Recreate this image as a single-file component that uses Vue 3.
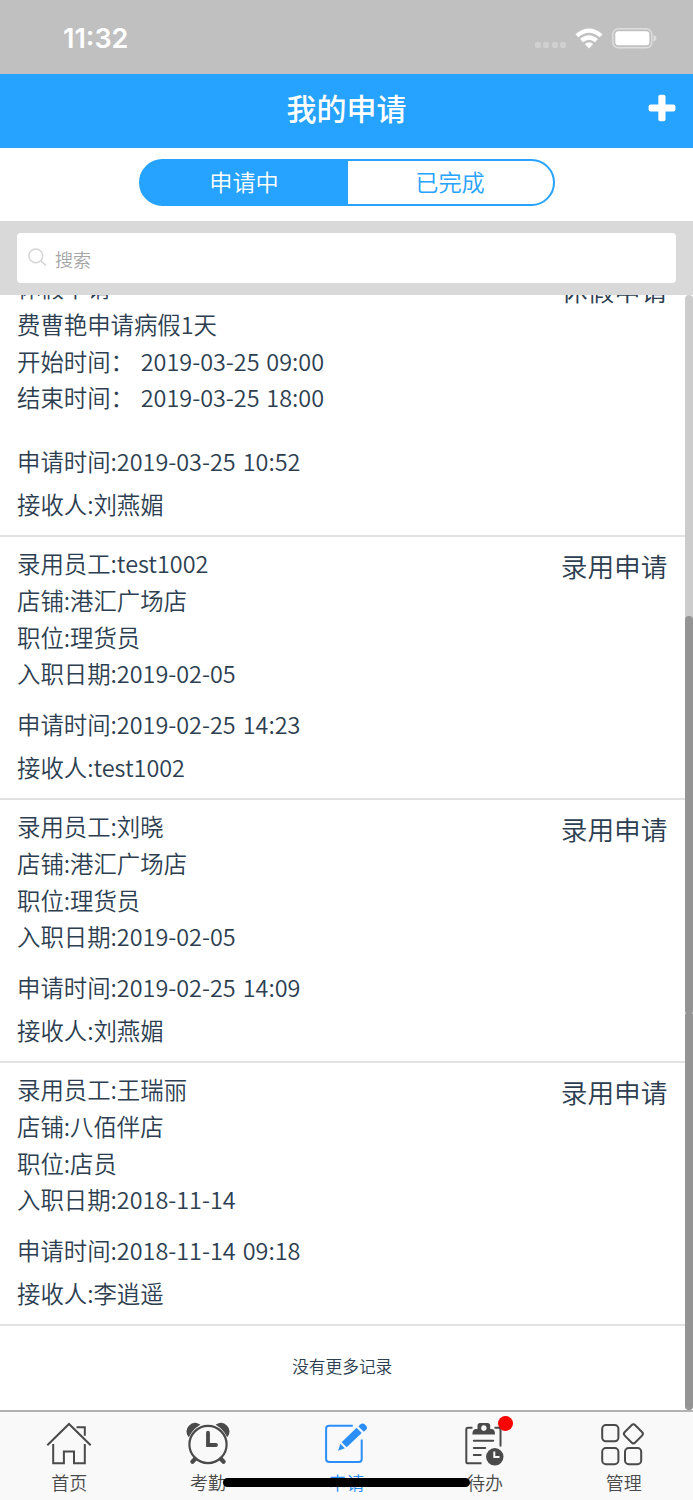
<template>
  <div class="page">
    <!-- 状态栏 -->
    <div class="status-bar">
      <span class="clock">11:32</span>
      <div class="status-icons">
        <div class="signal"><i v-for="n in 4" :key="n"></i></div>
        <svg class="wifi" viewBox="0 0 28 21">
          <path d="M0.4 6.2 Q14 -5.4 27.6 6.2 L24.7 9.3 Q14 0.2 3.3 9.3 Z" />
          <path d="M5.1 11.1 Q14 3.6 22.9 11.1 L20 14.2 Q14 9.2 8 14.2 Z" />
          <path d="M9.8 16 Q14 12.4 18.2 16 L14 20.4 Z" />
        </svg>
        <svg class="battery" viewBox="0 0 45 21">
          <rect x="0.8" y="0.8" width="39" height="19" rx="5.5" fill="none" stroke="#dedede" stroke-width="1.4" />
          <rect x="3.3" y="3.3" width="34" height="14" rx="3" fill="#fff" />
          <path d="M41.5 7 Q44.4 8 44.4 10.3 Q44.4 12.8 41.5 13.7 Z" fill="#dedede" />
        </svg>
      </div>
    </div>

    <!-- 标题 -->
    <div class="header">
      <span class="title">我的申请</span>
      <svg class="plus" viewBox="0 0 28 28">
        <rect x="10.3" y="0.7" width="7.2" height="26.6" rx="1.8" />
        <rect x="0.6" y="10.4" width="26.8" height="7.2" rx="1.8" />
      </svg>
    </div>

    <!-- 切换 -->
    <div class="tabs">
      <div class="tab-group">
        <div
          v-for="(tab, i) in tabs"
          :key="tab"
          class="tab"
          :class="{ active: i === current }"
          @click="current = i"
        >{{ tab }}</div>
      </div>
    </div>

    <!-- 搜索 -->
    <div class="search">
      <div class="search-box">
        <svg class="search-icon" viewBox="0 0 19 19">
          <circle cx="7.8" cy="7.8" r="6.9" />
          <path d="M12.8 12.8 L18 17.6" />
        </svg>
        <span>搜索</span>
      </div>
    </div>

    <!-- 申请列表 -->
    <div class="list">
      <div class="list-body">
        <div class="card" v-for="(item, i) in list" :key="i">
          <div class="info">
            <div class="lines" :class="{ leave: item.leave }">
              <p v-for="line in item.lines" :key="line">{{ line }}</p>
            </div>
            <div class="meta">
              <p>申请时间:{{ item.time }}</p>
              <p>接收人:{{ item.receiver }}</p>
            </div>
          </div>
          <div class="type">{{ item.type }}</div>
        </div>
        <div class="no-more">没有更多记录</div>
      </div>
      <div class="scrollbar">
        <div class="space"></div>
        <div class="thumb upper"></div>
        <div class="thumb lower"></div>
      </div>
    </div>

    <!-- 底部导航 -->
    <div class="nav">
      <div class="nav-item">
        <svg viewBox="0 0 48 48" class="line">
          <path d="M2.3 24.3 L24 3 L45.7 24.3" />
          <path d="M31.5 6.3 H39.8 V14.8" />
          <path d="M8.2 23 V42.3 H18.9 V30.5 H29 V42.3 H39.8 V23" />
        </svg>
        <span>首页</span>
      </div>
      <div class="nav-item">
        <svg viewBox="0 0 48 48" class="line">
          <circle cx="24" cy="23.5" r="18.6" stroke-width="2.2" />
          <path d="M24 11.7 V24 H32" stroke-width="3.8" stroke-linecap="round" />
          <path d="M11 38 L8.4 40.8 M37 38 L39.6 40.8" stroke-width="4.2" stroke-linecap="round" />
          <path d="M4.7 14.5 A7.6 7.6 0 0 1 14.6 3.7 Q8 8 4.7 14.5 Z" fill="#4a4a4a" stroke-width="1.8" />
          <path d="M43.3 14.5 A7.6 7.6 0 0 0 33.4 3.7 Q40 8 43.3 14.5 Z" fill="#4a4a4a" stroke-width="1.8" />
        </svg>
        <span>考勤</span>
      </div>
      <div class="nav-item active">
        <svg viewBox="-0.8 0 48 48" class="line">
          <path d="M30 4.8 H6.5 Q3.3 4.8 3.3 7.5 V38.2 Q3.3 40.9 6.5 40.9 H36.2 Q38.9 40.9 38.9 38.2 V18.5" />
          <g fill="#2b8ff7" stroke="none">
            <path d="M18.8 21.2 L33.8 6.8 L38.9 11.9 L23.8 26.2 Z" />
            <path d="M17.6 22.8 L22 27.2 L15.3 29.8 Z" />
            <path d="M35.6 5.4 L37.8 3.3 Q40 1.6 42.7 4 Q45.3 6.6 43.3 8.8 L41 10.8 Z" />
          </g>
        </svg>
        <span>申请</span>
      </div>
      <div class="nav-item">
        <svg viewBox="0.5 0 48 48" class="line">
          <path d="M12 6.8 H7.5 Q5.8 6.8 5.8 8.5 V40.7 Q5.8 42.3 7.5 42.3 H21" />
          <path d="M34 6.8 H38 Q40 6.8 40 8.5 V25.5" />
          <path
            d="M17 8 V4.5 Q17 2 19.5 2 H27 Q29.7 2 29.7 4.5 V8 H31.5 Q34.5 8.5 34.5 13.4 H11.8 Q12 8.5 15 8 Z M23.3 4.3 A2.8 2.8 0 1 0 23.4 4.3 Z"
            fill="#4a4a4a"
            stroke="none"
            fill-rule="evenodd"
          />
          <path d="M13.3 19.8 H32.7 M13.3 27 H24.7 M13.3 34.1 H20.3" stroke-linecap="round" />
          <circle cx="34.3" cy="35.8" r="8.7" fill="#4a4a4a" stroke="none" />
          <path d="M33.8 30.5 V36 H39" stroke="#f9f9f9" />
        </svg>
        <i class="badge"></i>
        <span>待办</span>
      </div>
      <div class="nav-item">
        <svg viewBox="1.5 0.8 48 48" class="line">
          <rect x="3.7" y="4.9" width="16.2" height="16.2" rx="3.7" />
          <rect x="3.7" y="27.8" width="16.2" height="16.2" rx="3.7" />
          <rect x="26.5" y="27.8" width="16.2" height="16.2" rx="3.7" />
          <rect x="27.5" y="6.2" width="14.8" height="14.8" rx="2.6" transform="rotate(45 34.9 13.6)" />
        </svg>
        <span>管理</span>
      </div>
      <div class="home-indicator"></div>
    </div>
  </div>
</template>

<script setup>
import { ref } from 'vue'

const tabs = ['申请中', '已完成']
const current = ref(0)

const list = [
  {
    type: '休假申请',
    leave: true,
    lines: ['休假申请', '费曹艳申请病假1天', '开始时间： 2019-03-25 09:00', '结束时间： 2019-03-25 18:00'],
    time: '2019-03-25 10:52',
    receiver: '刘燕媚'
  },
  {
    type: '录用申请',
    lines: ['录用员工:test1002', '店铺:港汇广场店', '职位:理货员', '入职日期:2019-02-05'],
    time: '2019-02-25 14:23',
    receiver: 'test1002'
  },
  {
    type: '录用申请',
    lines: ['录用员工:刘晓', '店铺:港汇广场店', '职位:理货员', '入职日期:2019-02-05'],
    time: '2019-02-25 14:09',
    receiver: '刘燕媚'
  },
  {
    type: '录用申请',
    lines: ['录用员工:王瑞丽', '店铺:八佰伴店', '职位:店员', '入职日期:2018-11-14'],
    time: '2018-11-14 09:18',
    receiver: '李逍遥'
  }
]
</script>

<style>
body {
  margin: 0;
}
</style>

<style scoped>
.page {
  display: flex;
  flex-direction: column;
  width: 693px;
  height: 1500px;
  overflow: hidden;
  background: #fff;
  color: #2c3e50;
  font-family: "Noto Sans CJK SC", sans-serif;
  font-weight: 350;
}

p {
  margin: 0;
}

.status-bar {
  display: flex;
  flex: none;
  align-items: center;
  justify-content: space-between;
  box-sizing: border-box;
  height: 74px;
  padding: 2px 36px 0 63px;
  background: #c0c0c0;
}

.clock {
  padding-top: 1px;
  color: #fff;
  font: 600 27px/30px Inter, sans-serif;
}

.status-icons {
  display: flex;
  align-items: center;
}

.signal {
  display: flex;
  gap: 2.4px;
  margin: 13px 9px 0 0;
}

.signal i {
  width: 6px;
  height: 6px;
  border-radius: 2px;
  background: #d0d0d0;
}

.wifi {
  width: 28px;
  height: 21px;
  margin-right: 9px;
  fill: #fff;
}

.battery {
  width: 45px;
  height: 21px;
}

.header {
  display: grid;
  flex: none;
  grid-template-columns: 1fr auto 1fr;
  align-items: center;
  box-sizing: border-box;
  height: 73.5px;
  padding: 0 17px 5px;
  background: #26a2ff;
}

.title {
  grid-column: 2;
  padding-bottom: 3px;
  color: #fff;
  font-size: 30px;
  line-height: 40px;
  font-weight: 500;
}

.plus {
  justify-self: end;
  width: 28px;
  height: 28px;
  fill: #fff;
}

.tabs {
  display: flex;
  flex: none;
  justify-content: center;
  box-sizing: border-box;
  height: 73.5px;
  padding-top: 11.5px;
}

.tab-group {
  display: flex;
  box-sizing: border-box;
  width: 416px;
  height: 47px;
  overflow: hidden;
  border: 2px solid #26a2ff;
  border-radius: 24px;
  background: linear-gradient(90deg, #26a2ff 50%, #fff 50%);
}

.tab {
  flex: 1;
  color: #26a2ff;
  font-size: 23.2px;
  line-height: 41px;
  text-align: center;
}

.tab.active {
  flex: 0 0 207px;
  background: #26a2ff;
  color: #fff;
}

.search {
  box-sizing: border-box;
  flex: none;
  height: 74px;
  padding: 12px 17px;
  background: #d9d9d9;
}

.search-box {
  display: flex;
  align-items: center;
  height: 50px;
  padding-left: 11px;
  border-radius: 4px;
  background: #fff;
  color: #a5a5a5;
  font-size: 18px;
}

.search-box span {
  padding-top: 2px;
}

.search-icon {
  width: 19px;
  height: 19px;
  margin: 0 8px 2px 0;
  fill: none;
  stroke: #d5d5d5;
  stroke-width: 1.5;
}

.list {
  display: flex;
  flex: none;
  height: 1115px;
  overflow: hidden;
}

.list-body {
  flex: 1;
  margin-top: -34px;
}

.card {
  display: flex;
  justify-content: space-between;
  box-sizing: border-box;
  height: 263px;
  padding: 8px 17px 0;
  border-bottom: 2px solid #e2e2e2;
}

.card:first-child {
  height: 276px;
}

.lines {
  height: 157.5px;
  font-size: 23.4px;
  line-height: 36.75px;
  white-space: pre;
  word-spacing: 1.6px;
}

.lines.leave {
  height: 170.5px;
}

.meta {
  font-size: 23.4px;
  line-height: 43.7px;
  word-spacing: 1.9px;
}

.type {
  font-size: 26.7px;
  line-height: 42px;
}

.no-more {
  padding-top: 27px;
  font-size: 16.7px;
  line-height: 26px;
  text-align: center;
}

.scrollbar {
  display: flex;
  flex-direction: column;
  width: 8.5px;
  border-radius: 4px;
  background: #ccc;
}

.space {
  height: 321px;
}

.thumb {
  background: #949494;
}

.thumb.upper {
  height: 397px;
  border-radius: 4px 4px 2px 2px;
}

.thumb.lower {
  flex: 1;
  border-radius: 2px 2px 4px 4px;
}

.nav {
  position: relative;
  display: flex;
  flex: 1;
  box-sizing: border-box;
  border-top: 2px solid #b2b2b2;
  background: #f9f9f9;
}

.nav-item {
  position: relative;
  display: flex;
  flex: 1;
  flex-direction: column;
  align-items: center;
  color: #4a4a4a;
  font-size: 18px;
  line-height: 26px;
}

.nav-item.active {
  color: #2b8ff7;
}

.nav-item svg {
  width: 48px;
  height: 48px;
  margin-top: 9px;
}

.line {
  fill: none;
  stroke: currentColor;
  stroke-width: 2;
}

.badge {
  position: absolute;
  top: 3.5px;
  left: 82px;
  width: 15px;
  height: 15px;
  border-radius: 50%;
  background: #f00;
}

.home-indicator {
  position: absolute;
  top: 66px;
  left: 223px;
  width: 247px;
  height: 8.5px;
  border-radius: 5px;
  background: #000;
}
</style>
